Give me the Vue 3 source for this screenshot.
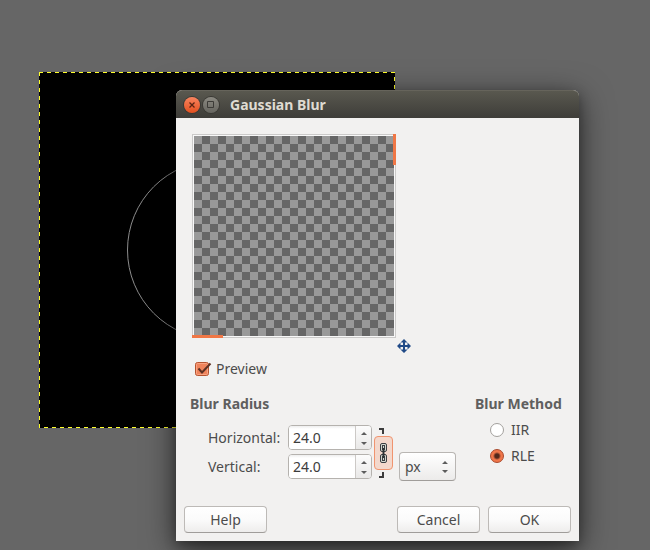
<script setup>
import { ref } from 'vue'

const preview = ref(true)
const horizontal = ref('24.0')
const vertical = ref('24.0')
const linked = ref(true)
const unit = ref('px')
const method = ref('RLE')

function step(field, amount) {
  const next = Math.max(0, parseFloat(field.value) + amount).toFixed(1)
  if (linked.value) {
    horizontal.value = next
    vertical.value = next
  } else {
    field.value = next
  }
}
const stepHorizontal = (amount) => step(horizontal, amount)
const stepVertical = (amount) => step(vertical, amount)
</script>

<template>
  <main class="desktop">
    <div class="canvas">
      <svg viewBox="0 0 356 356" aria-hidden="true">
        <rect width="356" height="356" fill="#000" />
        <circle cx="178" cy="178" r="89.500" fill="none" stroke="#8c8c8c" stroke-width="1" />
        <g stroke="#ffff2b" stroke-width="1" stroke-dasharray="4 4">
          <path d="M0 .5H356" />
          <path d="M.5 0V356" />
          <path d="M355.500 5V356" />
          <path d="M5 355.500H356" />
        </g>
      </svg>
    </div>

    <form class="dialog" @submit.prevent>
      <header class="titlebar">
        <button type="button" class="win close" aria-label="Close">
          <svg viewBox="0 0 16 16"><path d="M5.500 5.500l5 5M10.500 5.500l-5 5" /></svg>
        </button>
        <button type="button" class="win" aria-label="Maximize">
          <svg viewBox="0 0 16 16"><path d="M4.500 4.500h6v6h-6z" /></svg>
        </button>
        <h1>Gaussian Blur</h1>
      </header>

      <div class="body">
        <div class="preview">
          <div class="frame">
            <div class="checker"></div>
            <i class="bar bar-v"></i>
            <i class="bar bar-h"></i>
          </div>
          <svg class="move" viewBox="0 0 14 14" aria-hidden="true">
            <path d="M6 2h2v4h4v2H8v4H6V8H2V6h4z" />
            <path d="M7 0l3.500 3.500h-7zM7 14l3.500-3.500h-7zM0 7l3.500-3.500v7zM14 7l-3.500-3.500v7z" />
          </svg>
        </div>

        <label class="check">
          <input v-model="preview" type="checkbox" />
          <svg viewBox="0 0 18 18" aria-hidden="true">
            <rect class="box" x="1.500" y="2.500" width="13" height="13" rx="2" />
            <rect class="shine" x="2.500" y="3.500" width="11" height="11" rx="1" />
            <path class="tick" d="M4.500 8.500l3.500 4 8.500-9" />
          </svg>
          <span>Preview</span>
        </label>

        <div class="settings">
          <section class="radius">
            <h2>Blur Radius</h2>
            <div class="controls">
              <div class="fields">
                <label for="horizontal">Horizontal:</label>
                <div class="spin">
                  <input id="horizontal" v-model="horizontal" type="text" inputmode="decimal" />
                  <span class="steps">
                    <button type="button" aria-label="Increase horizontal" @click="stepHorizontal(1)">
                      <svg viewBox="0 0 6 3"><path d="M3 0l3 3H0z" /></svg>
                    </button>
                    <button type="button" aria-label="Decrease horizontal" @click="stepHorizontal(-1)">
                      <svg viewBox="0 0 6 3"><path d="M0 0h6L3 3z" /></svg>
                    </button>
                  </span>
                </div>
                <label for="vertical">Vertical:</label>
                <div class="spin">
                  <input id="vertical" v-model="vertical" type="text" inputmode="decimal" />
                  <span class="steps">
                    <button type="button" aria-label="Increase vertical" @click="stepVertical(1)">
                      <svg viewBox="0 0 6 3"><path d="M3 0l3 3H0z" /></svg>
                    </button>
                    <button type="button" aria-label="Decrease vertical" @click="stepVertical(-1)">
                      <svg viewBox="0 0 6 3"><path d="M0 0h6L3 3z" /></svg>
                    </button>
                  </span>
                </div>
              </div>

              <div class="chain">
                <svg class="bracket" viewBox="0 0 5 6" aria-hidden="true"><path d="M0 1h4v5" /></svg>
                <button
                  type="button"
                  aria-label="Link values"
                  :class="{ on: linked }"
                  :aria-pressed="linked"
                  @click="linked = !linked"
                >
                  <svg viewBox="0 0 9 22" aria-hidden="true">
                    <g class="link">
                      <rect x="1.500" y="1.500" width="6" height="8" rx="1.500" />
                      <rect x="3.500" y="3.500" width="2" height="4" />
                      <rect x="1.500" y="12.500" width="6" height="8" rx="1.500" />
                      <rect x="3.500" y="14.500" width="2" height="4" />
                    </g>
                    <path class="pin" d="M4.500 6v10" />
                  </svg>
                </button>
                <svg class="bracket" viewBox="0 0 5 6" aria-hidden="true"><path d="M0 5h4V0" /></svg>
              </div>

              <div class="unit">
                <select v-model="unit" aria-label="Unit">
                  <option>px</option>
                  <option>in</option>
                  <option>mm</option>
                </select>
                <svg viewBox="0 0 6 12" aria-hidden="true"><path d="M3 0l3 3H0zM0 9h6l-3 3z" /></svg>
              </div>
            </div>
          </section>

          <fieldset class="method">
            <legend>Blur Method</legend>
            <label><input v-model="method" type="radio" name="method" value="IIR" /><span>IIR</span></label>
            <label><input v-model="method" type="radio" name="method" value="RLE" /><span>RLE</span></label>
          </fieldset>
        </div>

        <footer class="actions">
          <button type="button" class="btn help">Help</button>
          <button type="button" class="btn">Cancel</button>
          <button type="submit" class="btn">OK</button>
        </footer>
      </div>
    </form>
  </main>
</template>

<style>
body {
  background: #666;
}
</style>

<style scoped>
.desktop,
.desktop * {
  box-sizing: border-box;
}
.desktop {
  position: relative;
  min-height: 100vh;
  overflow: hidden;
  background: #666;
  color: #4c4c4c;
  font: 14px/20px "Noto Sans", "Open Sans", sans-serif;
}
button,
input,
select {
  margin: 0;
  padding: 0;
  color: inherit;
  font: inherit;
}
svg {
  display: block;
}
.canvas {
  position: absolute;
  left: 39px;
  top: 72px;
  width: 356px;
}
.canvas svg {
  width: 100%;
}
.dialog {
  position: absolute;
  left: 176px;
  top: 90px;
  width: 62%;
  min-width: 400px;
  border-radius: 6px 6px 0 0;
  background: #f2f1f0;
  box-shadow: 0 8px 32px rgba(0, 0, 0, 0.6), 0 4px 12px rgba(0, 0, 0, 0.3);
}
.titlebar {
  display: flex;
  align-items: center;
  gap: 3px;
  height: 28px;
  padding: 0 8px;
  border-top: 1px solid #66645b;
  border-radius: 6px 6px 0 0;
  background: linear-gradient(#59584f, #3e3d39);
}
.titlebar h1 {
  margin: 0 0 0 8px;
  color: #dfdbd2;
  font-size: 14px;
  line-height: 20px;
}
.win {
  width: 16px;
  height: 16px;
  border: 0;
  border-radius: 50%;
  background: linear-gradient(#8b8981, #66655f);
  box-shadow: 0 0 0 1px #3a3934;
}
.win.close {
  background: linear-gradient(#f8845f, #e4501f);
}
.win path {
  fill: none;
  stroke: #3c3b37;
}
.win.close path {
  stroke: #5a2413;
  stroke-width: 1.3;
}
.body {
  padding: 16px 8px 8px;
}
.preview {
  display: flex;
  align-items: flex-end;
  gap: 1px;
  height: 220px;
  padding-left: 8px;
}
.frame {
  position: relative;
  align-self: flex-start;
  padding: 1px;
  border: 1px solid #cbcac9;
  background: #f8f8f8;
}
.checker {
  width: 200px;
  height: 200px;
  background: repeating-conic-gradient(#666 0 25%, #999 0 50%) 0 0 / 16px 16px;
}
.bar {
  position: absolute;
  background: #f07746;
}
.bar-v {
  top: -1px;
  right: -1px;
  width: 3px;
  height: 31px;
}
.bar-h {
  left: -1px;
  bottom: -1px;
  width: 31px;
  height: 3px;
}
.move {
  width: 14px;
  height: 14px;
  margin-bottom: 1px;
  fill: #204a87;
}
.check {
  display: inline-grid;
  grid-template-columns: 18px auto;
  align-items: center;
  gap: 4px;
  margin: 5px 0 0 10px;
}
.check input {
  grid-area: 1 / 1;
  width: 18px;
  height: 18px;
  appearance: none;
}
.check svg {
  grid-area: 1 / 1;
  width: 18px;
  height: 18px;
  pointer-events: none;
}
.box {
  fill: #f0845c;
  stroke: #b5532f;
}
.shine {
  fill: none;
  stroke: #f9a483;
}
.tick {
  fill: none;
  stroke: #5e3123;
  stroke-width: 2;
}
.check input:not(:checked) + svg .box {
  fill: #fff;
}
.check input:not(:checked) + svg .tick {
  display: none;
}
.settings {
  display: flex;
  justify-content: space-between;
  margin-top: 11px;
  padding-left: 6px;
}
h2,
legend {
  margin: 0;
  padding: 0;
  color: #5f5f5f;
  font-size: 14px;
  font-weight: 700;
  line-height: 20px;
}
.controls {
  display: flex;
  align-items: flex-start;
  margin-top: 11px;
  padding-left: 18px;
}
.fields {
  display: grid;
  grid-template-columns: 76px 84px;
  grid-auto-rows: 25px;
  align-items: center;
  gap: 4px;
}
.spin {
  display: flex;
  height: 25px;
  overflow: hidden;
  border: 1px solid #b5b2ae;
  border-radius: 4px;
  background: #fff;
}
.spin input {
  flex: 1;
  min-width: 0;
  padding-left: 4px;
  border: 0;
  outline: 0;
  background: linear-gradient(#eee, #fff 3px);
  color: #3c3c3c;
}
.steps {
  display: flex;
  flex-direction: column;
  width: 16px;
  padding: 2px 0 1px;
  border-left: 1px solid #ccc9c6;
  background: linear-gradient(#fcfcfc, #e9e8e7);
}
.steps button {
  display: grid;
  flex: 1;
  place-items: center;
  border: 0;
  background: none;
}
.steps svg {
  width: 6px;
  height: 3px;
  fill: #5c5c5c;
}
.chain {
  display: flex;
  flex-direction: column;
  align-items: center;
  gap: 2px;
  width: 19px;
  margin: 3px 0 0 2px;
}
.bracket {
  width: 5px;
  height: 6px;
  margin-right: 4px;
  fill: none;
  stroke: #3c3c3c;
  stroke-width: 2;
}
.chain button {
  display: grid;
  place-items: center;
  width: 19px;
  height: 34px;
  border: 1px solid #b5b2ae;
  border-radius: 4px;
  background: #f6f6f5;
}
.chain button.on {
  border-color: #f0946f;
  background: #f3d8cc;
}
.chain button svg {
  width: 9px;
  height: 22px;
}
.link {
  fill: #d3d7cf;
  stroke: #3c4043;
}
.pin {
  fill: none;
  stroke: #2e3436;
  stroke-width: 2;
}
.unit {
  display: grid;
  align-items: center;
  margin: 27px 0 0 6px;
}
.unit select {
  grid-area: 1 / 1;
  width: 57px;
  height: 29px;
  padding-left: 5px;
  border: 1px solid #b9b6b3;
  border-bottom-color: #a09d9a;
  border-radius: 4px;
  appearance: none;
  background: linear-gradient(#fff, #ecebea);
}
.unit svg {
  grid-area: 1 / 1;
  justify-self: end;
  width: 6px;
  height: 12px;
  margin-right: 8px;
  fill: #5c5c5c;
  pointer-events: none;
}
.method {
  min-width: 96px;
  margin: 0;
  padding: 0;
  border: 0;
}
.method label {
  display: flex;
  align-items: center;
  gap: 7px;
  height: 26px;
  padding-left: 15px;
}
.method legend {
  margin-bottom: 3px;
}
.method input {
  width: 14px;
  height: 14px;
  border: 1px solid #a3a09d;
  border-radius: 50%;
  appearance: none;
  background: #fff;
}
.method input:checked {
  border-color: #a9482a;
  background: radial-gradient(circle, #53281b 0 2px, #f0764a 4px);
}
.actions {
  display: flex;
  gap: 8px;
  margin-top: 25px;
}
.btn {
  width: 83px;
  height: 27px;
  border: 1px solid #bdbab7;
  border-bottom-color: #a09d9a;
  border-radius: 4px;
  background: linear-gradient(#fff, #fbfbfb 50%, #eeedec);
}
.help {
  margin-right: auto;
}
</style>
